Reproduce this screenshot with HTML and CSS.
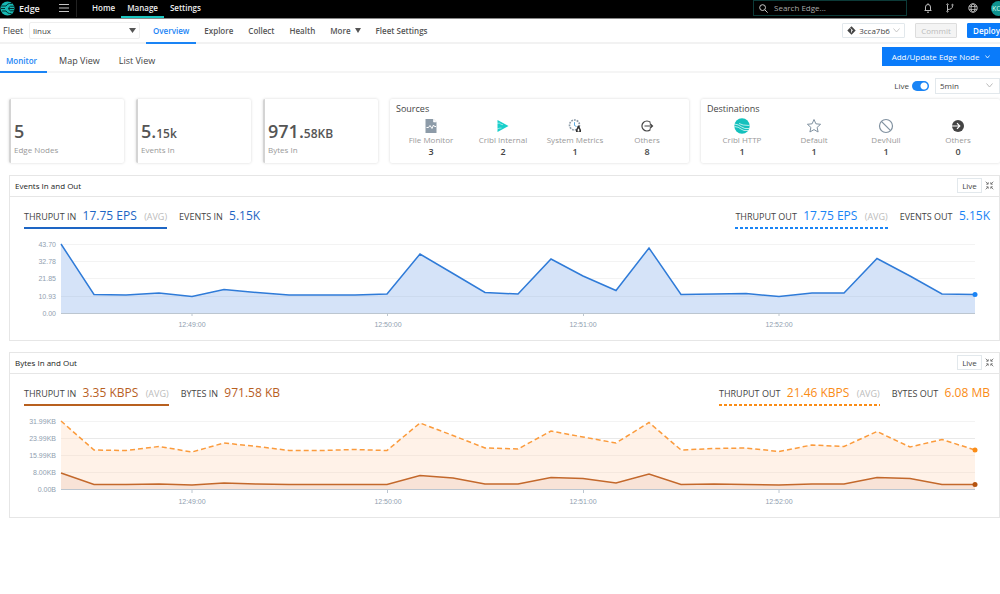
FILE: index.html
```html
<!DOCTYPE html>
<html lang="en">
<head>
  <meta charset="UTF-8">
  <meta name="viewport" content="width=device-width, initial-scale=1.0">
  <title>Edge - Fleet linux</title>
  <link rel="stylesheet" href="styles.css">
</head>
<body>
  <header class="topbar">
    <a class="brand" href="#">
      <svg width="15" height="15" viewBox="0 0 15 15">
        <circle cx="7.5" cy="7.5" r="7" fill="#17b8b3"/>
        <path d="M1 5h5q1.500-2.500 3.500-2.500h3M1 7.500h4M2 10h4q1.500 2.500 3.500 2.500h2M14 5.200h-3.500q-1 0-2 2.300 1 2.300 2 2.300H14M8.500 7.500H14" fill="none" stroke="#062f2e"/>
      </svg>
      <span>Edge</span>
    </a>
    <button class="icon-btn burger" aria-label="Menu">
      <svg width="10" height="10" viewBox="0 0 10 10"><path d="M0 1.500h10M0 5h10M0 8.500h10" stroke="#c4c4c4"/></svg>
    </button>
    <nav class="main-nav">
      <a href="#">Home</a>
      <a href="#" class="active">Manage</a>
      <a href="#">Settings</a>
    </nav>
    <label class="search">
      <svg width="9" height="9" viewBox="0 0 9 9"><circle cx="3.600" cy="3.600" r="2.900" fill="none" stroke="#ccc"/><path d="M5.800 5.800L8.600 8.600" stroke="#ccc"/></svg>
      <input type="text" placeholder="Search Edge..." aria-label="Search Edge">
    </label>
    <div class="top-icons">
      <button class="icon-btn" aria-label="Notifications">
        <svg width="8" height="10" viewBox="0 0 8 10" fill="none" stroke="#bbb"><path d="M.500 7.500h7M1.500 7.500V4a2.500 2.500 0 0 1 5 0v3.500M4 .300v1.200M3 9.200h2"/></svg>
      </button>
      <button class="icon-btn" aria-label="Git">
        <svg width="8" height="10" viewBox="0 0 8 10" fill="none" stroke="#bbb"><path d="M1.500 2v6M1.500 6.500q5 0 5-3.500"/><circle cx="1.500" cy="1.500" r=".7"/><circle cx="1.500" cy="8.400" r=".7"/><circle cx="6.500" cy="2" r=".7"/></svg>
      </button>
      <button class="icon-btn" aria-label="Language">
        <svg width="10" height="10" viewBox="0 0 10 10" fill="none" stroke="#bbb"><circle cx="5" cy="5" r="4.200"/><ellipse cx="5" cy="5" rx="2" ry="4.200"/><path d="M1 3.500h8M1 6.500h8" stroke-width=".8"/></svg>
      </button>
      <button class="avatar" aria-label="Account">KC</button>
    </div>
  </header>

  <div class="fleet-bar">
    <label for="fleet">Fleet</label>
    <select id="fleet" class="fleet-select"><option>linux</option></select>
    <nav class="fleet-nav">
      <a href="#" class="active">Overview</a>
      <a href="#">Explore</a>
      <a href="#">Collect</a>
      <a href="#">Health</a>
      <a href="#">More <svg width="6" height="5" viewBox="0 0 6 5"><path d="M0 0h6L3 5z" fill="#555"/></svg></a>
      <a href="#">Fleet Settings</a>
    </nav>
    <div class="actions">
      <button class="btn commit-id">
        <svg width="9" height="9" viewBox="0 0 9 9"><path d="M4.500.300L8.700 4.500 4.500 8.700.300 4.500z" fill="#444"/><path d="M3.500 2.300l1 1.200v3M4.500 3.500l1.500 1.200" stroke="#fff" stroke-width=".8" fill="none"/></svg>
        3cca7b6
        <svg width="7" height="5" viewBox="0 0 7 5"><path d="M.500.500l3 3.500 3-3.500" fill="none" stroke="#bbb" stroke-width=".8"/></svg>
      </button>
      <button class="btn commit" disabled>Commit</button>
      <button class="btn deploy">Deploy</button>
    </div>
  </div>

  <div class="view-bar">
    <nav class="view-nav">
      <a href="#" class="active">Monitor</a>
      <a href="#">Map View</a>
      <a href="#">List View</a>
    </nav>
    <button class="add-node">
      Add/Update Edge Node
      <svg width="5" height="4" viewBox="0 0 5 4"><path d="M.500.500l2 2.500 2-2.500" fill="none" stroke="#fff" stroke-width=".8"/></svg>
    </button>
  </div>

  <main>
    <div class="live-row">
      <label for="live">Live</label>
      <input type="checkbox" id="live" class="switch" checked>
      <select class="range" aria-label="Time range"><option>5min</option></select>
    </div>

    <section class="cards">
      <div class="card stat">
        <div class="stat-value">5</div>
        <div class="stat-label">Edge Nodes</div>
      </div>
      <div class="card stat">
        <div class="stat-value">5.<small>15k</small></div>
        <div class="stat-label">Events In</div>
      </div>
      <div class="card stat">
        <div class="stat-value">971.<small>58KB</small></div>
        <div class="stat-label">Bytes In</div>
      </div>
      <div class="card group">
        <h2>Sources</h2>
        <ul>
          <li>
            <svg width="16" height="16" viewBox="0 0 16 16"><path d="M2.500 1h8l3 3v11h-11z" fill="#8d9ba8"/><path d="M10.500 1v3h3" fill="#fff" stroke="#fff" stroke-width=".6"/><path d="M3.500 9.500h2l1.500-2 2 3 1.500-3.500 1 1.500h1.500" fill="none" stroke="#fff"/></svg>
            <span>File Monitor</span><b>3</b>
          </li>
          <li>
            <svg width="16" height="16" viewBox="0 0 16 16"><path d="M2.500 2L13.500 8l-11 6z" fill="#19cfcb"/><path d="M2 5.200h2.500q1.500 1.500 3.500 1.500M2 11q2-1 4.500-1" fill="none" stroke="#fff" stroke-width=".5"/></svg>
            <span>Cribl Internal</span><b>2</b>
          </li>
          <li>
            <svg width="16" height="16" viewBox="0 0 16 16"><circle cx="7.500" cy="7" r="5" fill="none" stroke="#8d9ba8" stroke-width="1.600" stroke-dasharray="1.800 1"/><path d="M7.500 4.200V7.500l2 1" fill="none" stroke="#4aa3e0" stroke-width=".9"/><path d="M11.500 7.500q1.300 0 1.300 2 1.800 2.500 1.200 4.500h-5q-.7-2 1.200-4.500 0-2 1.300-2z" fill="#333"/><path d="M11.500 10.200q1.300 1.500.8 3.400h-1.600q-.5-1.900.8-3.400z" fill="#fff"/></svg>
            <span>System Metrics</span><b>1</b>
          </li>
          <li>
            <svg width="16" height="16" viewBox="0 0 16 16" fill="none" stroke="#444" stroke-width="1.200"><path d="M11.500 4.500a5 5 0 1 0 0 7"/><path d="M5.500 8h8M10.800 5.500L13.500 8l-2.700 2.500"/></svg>
            <span>Others</span><b>8</b>
          </li>
        </ul>
      </div>
      <div class="card group">
        <h2>Destinations</h2>
        <ul>
          <li>
            <svg width="16" height="16" viewBox="0 0 16 16"><circle cx="8" cy="8" r="7.700" fill="#14c1bd"/><path d="M.3 6q4 .3 7 2.800t8 1.700M.5 8.500q4 .3 6.500 2.500t7 1.500M5 5.500q3 2 10.500 2" fill="none" stroke="#fff" stroke-width=".7"/></svg>
            <span>Cribl HTTP</span><b>1</b>
          </li>
          <li>
            <svg width="16" height="16" viewBox="0 0 16 16"><path d="M8 1.500l1.900 4.300 4.700.5-3.500 3.100 1 4.600L8 11.600 3.900 14l1-4.600L1.400 6.300l4.700-.5z" fill="none" stroke="#8091a0"/></svg>
            <span>Default</span><b>1</b>
          </li>
          <li>
            <svg width="16" height="16" viewBox="0 0 16 16" fill="none" stroke="#8091a0" stroke-width="1.200"><circle cx="8" cy="8" r="6.500"/><path d="M3.400 3.400l9.200 9.200"/></svg>
            <span>DevNull</span><b>1</b>
          </li>
          <li>
            <svg width="16" height="16" viewBox="0 0 16 16"><circle cx="8" cy="8" r="6" fill="#444"/><path d="M2 8h7.500M7 5.200L9.800 8 7 10.800" fill="none" stroke="#fff" stroke-width="1.200"/></svg>
            <span>Others</span><b>0</b>
          </li>
        </ul>
      </div>
    </section>

    <section class="panel">
      <div class="panel-head">
        <h3>Events In and Out</h3>
        <button class="live-btn">Live</button>
        <button class="icon-btn" aria-label="Expand">
          <svg width="9" height="9" viewBox="0 0 9 9"><path d="M.700.700L3 3M3.200 1.200v2h-2M8.300.700L6 3M5.800 1.200v2h2M.700 8.300L3 6M1.200 5.800h2v2M8.300 8.300L6 6M5.800 7.800v-2h2" fill="none" stroke="#666" stroke-width=".8"/></svg>
        </button>
      </div>
      <div class="legend events">
        <div class="series in">THRUPUT IN <b>17.75 EPS</b> <i>(AVG)</i></div>
        <div class="total in">EVENTS IN <b>5.15K</b></div>
        <div class="series out">THRUPUT OUT <b>17.75 EPS</b> <i>(AVG)</i></div>
        <div class="total out">EVENTS OUT <b>5.15K</b></div>
      </div>
      <svg class="chart" viewBox="0 0 989 104">
        <path class="grid" d="M51 8.500H965M51 25.500H965M51 42.500H965M51 60.500H965"/>
        <polygon fill="#d5e3f8" points="51,8 84,58.5 116,59 149,57 182,60.5 214,53.5 247,56.5 279,59 312,59 345,59 377,58 410,18 443,37.5 475,56.5 508,58 541,23 573,40 606,54.5 639,12 671,58.5 704,58 736,57.5 769,60.5 802,57 834,57 867,22.5 900,40 932,58 965,58.5 965,77 51,77"/>
        <path class="grid over" d="M51 60.500H965"/>
        <polyline class="line" stroke="#2f7bd8" points="51,8 84,58.5 116,59 149,57 182,60.5 214,53.5 247,56.5 279,59 312,59 345,59 377,58 410,18 443,37.5 475,56.5 508,58 541,23 573,40 606,54.5 639,12 671,58.5 704,58 736,57.5 769,60.5 802,57 834,57 867,22.5 900,40 932,58 965,58.5"/>
        <circle cx="965" cy="58.5" r="2.500" fill="#1a84f5"/>
        <path class="axis" d="M51 77.500H965M182 77v3M377.500 77v3M573.500 77v3M769 77v3"/>
        <g class="y-labels">
          <text x="46" y="11">43.70</text>
          <text x="46" y="28">32.78</text>
          <text x="46" y="45">21.85</text>
          <text x="46" y="63">10.93</text>
          <text x="46" y="80">0.00</text>
        </g>
        <g class="x-labels">
          <text x="182" y="91">12:49:00</text>
          <text x="378" y="91">12:50:00</text>
          <text x="573" y="91">12:51:00</text>
          <text x="769" y="91">12:52:00</text>
        </g>
      </svg>
    </section>

    <section class="panel">
      <div class="panel-head">
        <h3>Bytes In and Out</h3>
        <button class="live-btn">Live</button>
        <button class="icon-btn" aria-label="Expand">
          <svg width="9" height="9" viewBox="0 0 9 9"><path d="M.700.700L3 3M3.200 1.200v2h-2M8.300.700L6 3M5.800 1.200v2h2M.700 8.300L3 6M1.200 5.800h2v2M8.300 8.300L6 6M5.800 7.800v-2h2" fill="none" stroke="#666" stroke-width=".8"/></svg>
        </button>
      </div>
      <div class="legend bytes">
        <div class="series in">THRUPUT IN <b>3.35 KBPS</b> <i>(AVG)</i></div>
        <div class="total in">BYTES IN <b>971.58 KB</b></div>
        <div class="series out">THRUPUT OUT <b>21.46 KBPS</b> <i>(AVG)</i></div>
        <div class="total out">BYTES OUT <b>6.08 MB</b></div>
      </div>
      <svg class="chart" viewBox="0 0 989 104">
        <path class="grid" d="M51 8.500H965M51 25.500H965M51 42.500H965M51 59.500H965"/>
        <polygon fill="#fff2e8" points="51,8 84,37 116,37.5 149,33.5 182,39 214,30 247,33.5 279,37.5 312,37.5 345,36.5 377,37.5 410,10 443,22.5 475,35 508,36 541,18 573,24 606,30 639,9.5 671,37 704,35.5 736,35 769,38.5 802,32 834,33.5 867,18.5 900,34 932,26.5 965,37 965,77 51,77"/>
        <polygon fill="#f8e3d7" points="51,60 84,71.5 116,71.5 149,71 182,72 214,70 247,71 279,71.5 312,71.5 345,71.5 377,71.5 410,62.5 443,65 475,71 508,71 541,64.5 573,65.5 606,70 639,61 671,71.5 704,71 736,71.5 769,72 802,71 834,71 867,64.5 900,65.5 932,71.5 965,71.5 965,77 51,77"/>
        <path class="grid over" d="M51 25.500H965M51 42.500H965M51 59.500H965"/>
        <polyline class="line dashed" stroke="#fb9b3c" points="51,8 84,37 116,37.5 149,33.5 182,39 214,30 247,33.5 279,37.5 312,37.5 345,36.5 377,37.5 410,10 443,22.5 475,35 508,36 541,18 573,24 606,30 639,9.5 671,37 704,35.5 736,35 769,38.5 802,32 834,33.5 867,18.5 900,34 932,26.5 965,37"/>
        <polyline class="line" stroke="#c3682b" points="51,60 84,71.5 116,71.5 149,71 182,72 214,70 247,71 279,71.5 312,71.5 345,71.5 377,71.5 410,62.5 443,65 475,71 508,71 541,64.5 573,65.5 606,70 639,61 671,71.5 704,71 736,71.5 769,72 802,71 834,71 867,64.5 900,65.5 932,71.5 965,71.5"/>
        <circle cx="965" cy="37" r="2.500" fill="#fa8c16"/>
        <circle cx="965" cy="71.5" r="2.500" fill="#b5530f"/>
        <path class="axis" d="M51 76.500H965M182 77v3M377.500 77v3M573.500 77v3M769 77v3"/>
        <g class="y-labels">
          <text x="46" y="11">31.99KB</text>
          <text x="46" y="28">23.99KB</text>
          <text x="46" y="45">15.99KB</text>
          <text x="46" y="62">8.00KB</text>
          <text x="46" y="79">0.00B</text>
        </g>
        <g class="x-labels">
          <text x="182" y="91">12:49:00</text>
          <text x="378" y="91">12:50:00</text>
          <text x="573" y="91">12:51:00</text>
          <text x="769" y="91">12:52:00</text>
        </g>
      </svg>
    </section>
  </main>
</body>
</html>
```
FILE: styles.css
```css
* {
  box-sizing: border-box;
}

body {
  margin: 0;
  font-family: 'Open Sans', 'Noto Sans', sans-serif;
  font-size: 8px;
  color: #444;
  background: #fff;
  overflow-x: hidden;
}

a {
  color: inherit;
  text-decoration: none;
}

button, input, select {
  font: inherit;
  color: inherit;
  margin: 0;
}

svg {
  display: block;
  flex: none;
}

.icon-btn {
  background: none;
  border: none;
  padding: 0;
  cursor: pointer;
}

/* Top bar */
.topbar {
  display: flex;
  align-items: center;
  height: 19px;
  padding-bottom: 2px;
  background: #000;
  border-bottom: 1px solid #888;
  color: #eee;
}

.brand {
  display: flex;
  align-items: center;
  gap: 4px;
  width: 59px;
  font-size: 9px;
  font-weight: 600;
}

.burger {
  width: 18px;
  height: 18px;
  border-right: 1px solid #222;
}

.main-nav {
  display: flex;
  align-self: stretch;
  margin-left: 9px;
  font-weight: 600;
}

.main-nav a {
  height: 18px;
  padding: 0 6px;
  line-height: 16px;
}

.main-nav .active {
  border-bottom: 2px solid #1ac6c0;
}

.search {
  display: flex;
  align-items: center;
  gap: 6px;
  width: 154px;
  height: 16px;
  margin-left: auto;
  padding: 0 5px;
  border: 1px solid #0c3a38;
}

.search input {
  flex: 1;
  min-width: 0;
  height: 14px;
  padding: 0 0 2px;
  border: none;
  outline: none;
  background: none;
}

.search input::placeholder {
  color: #aaa;
}

.top-icons {
  display: flex;
  align-items: center;
  gap: 14px;
  margin-left: 17px;
  margin-right: -6px;
}

.avatar {
  width: 15px;
  height: 15px;
  margin-left: -1px;
  padding: 0 0 0 1px;
  border: none;
  border-radius: 50%;
  background: #0f938f;
  color: #cfe;
  font-size: 7px;
  text-align: left;
}

/* Fleet bar */
.fleet-bar {
  display: flex;
  align-items: center;
  height: 25px;
  padding-left: 3px;
  border-bottom: 2px solid #f2f2f2;
}

.fleet-bar > label {
  width: 26px;
  font-size: 9px;
}

.fleet-select {
  width: 111px;
  height: 17px;
  padding: 0 3px 1px;
  border: 1px solid #eee;
  border-radius: 2px;
  appearance: none;
  background: #fff url("data:image/svg+xml,%3Csvg xmlns='http://www.w3.org/2000/svg' width='7' height='5'%3E%3Cpath d='M0 0h7L3.500 5z' fill='%23555'/%3E%3C/svg%3E") no-repeat right 3px center;
}

.fleet-nav {
  display: flex;
  gap: 1px;
  align-self: stretch;
  margin-left: 6px;
  font-weight: 600;
  color: #555;
}

.fleet-nav a {
  display: flex;
  align-items: center;
  gap: 4px;
  height: 25px;
  padding: 0 7px;
  border-bottom: 2px solid transparent;
}

.fleet-nav .active,
.view-nav .active {
  color: #1a84f5;
  border-bottom: 2px solid #1a84f5;
}

.actions {
  display: flex;
  gap: 10px;
  margin-left: auto;
  margin-right: -6px;
}

.btn {
  display: flex;
  align-items: center;
  justify-content: center;
  gap: 3px;
  height: 15px;
  padding: 0 5px;
  border: 1px solid #e2e8ec;
  border-radius: 1px;
  background: #fff;
}

.commit-id {
  width: 63px;
}

.commit {
  width: 42px;
  border-color: #ddd;
  background: #f4f4f4;
  color: #bbb;
}

.deploy {
  width: 39px;
  border-color: #0a7bfa;
  background: #0a7bfa;
  color: #fff;
  font-weight: 600;
}

/* Monitor / map / list tabs */
.view-bar {
  display: flex;
  justify-content: space-between;
  height: 29px;
  border-bottom: 2px solid #f5f5f5;
}

.view-nav {
  display: flex;
  gap: 5px;
}

.view-nav a {
  height: 29px;
  padding: 0 7px;
  border-bottom: 2px solid transparent;
  font-size: 9px;
  line-height: 34px;
}

.view-nav .active {
  padding: 0 10px 0 6px;
  font-size: 8px;
  font-weight: 600;
}

.add-node {
  display: flex;
  align-items: center;
  justify-content: center;
  gap: 6px;
  width: 118px;
  height: 19px;
  margin-top: 3px;
  padding: 0;
  border: none;
  background: #0a7bfa;
  color: #fff;
}

main {
  padding-left: 9px;
}

.live-row {
  display: flex;
  align-items: center;
  justify-content: flex-end;
  height: 15px;
  margin: 5px 0 6px;
}

.switch {
  width: 17px;
  height: 10px;
  margin: 0 6px 0 3px;
  border-radius: 5px;
  appearance: none;
  background: radial-gradient(circle at 12px 5px, #fff 3px, #1a84f5 4px);
}

.range {
  width: 65px;
  height: 16px;
  padding: 0 4px;
  border: 1px solid #e2e8ec;
  border-radius: 0;
  appearance: none;
  background: #fff url("data:image/svg+xml,%3Csvg xmlns='http://www.w3.org/2000/svg' width='7' height='5'%3E%3Cpath d='M.5.5l3 3.500 3-3.500' fill='none' stroke='%23bbb'/%3E%3C/svg%3E") no-repeat right 6px center;
}

/* Summary cards */
.cards {
  display: grid;
  grid-template-columns: repeat(3, 5fr) repeat(2, 13fr);
  gap: 12px;
  margin-bottom: 12px;
}

.card {
  height: 64px;
  border-radius: 2px;
  background: #fff;
  box-shadow: 0 0 3px rgba(0, 0, 0, 0.16);
}

.stat {
  padding: 20px 0 0 3px;
  border-left: 2px solid #d4d4d4;
}

.stat-value {
  height: 24px;
  font-size: 18px;
  line-height: 24px;
  font-weight: 600;
  color: #555;
}

.stat-value small {
  font-size: 12px;
}

.stat-label {
  line-height: 14px;
  color: #999;
}

.group {
  padding: 4px 6px 0 5px;
}

.group h2 {
  margin: 0;
  padding-left: 1px;
  font-size: 9px;
  line-height: 12px;
  font-weight: 400;
}

.group ul {
  display: grid;
  grid-template-columns: repeat(4, 1fr);
  margin: 3px 0 0;
  padding: 0;
  list-style: none;
}

.group li {
  display: flex;
  flex-direction: column;
  align-items: center;
  line-height: 12px;
}

.group li span {
  color: #999;
}

.group li b {
  font-size: 9px;
  line-height: 11px;
  font-weight: 600;
}

/* Chart panels */
.panel {
  margin-bottom: 11px;
  border: 1px solid #e6e6e6;
}

.panel-head {
  display: flex;
  align-items: center;
  gap: 3px;
  height: 21px;
  padding: 0 5px 2px;
  border-bottom: 1px solid #e6e6e6;
}

.panel-head h3 {
  flex: 1;
  margin: 0;
  font-size: 8px;
  font-weight: 400;
  color: #222;
}

.live-btn {
  width: 25px;
  height: 15px;
  padding: 0;
  border: 1px solid #e2e8ec;
  background: #fff;
}

.legend {
  display: flex;
  gap: 12px;
  margin-top: 9px;
  padding: 0 9px 0 14px;
  font-size: 9px;
  line-height: 20px;
}

.legend b {
  margin: 0 5px 0 4px;
  font-size: 12px;
  font-weight: 500;
}

.legend .total b {
  margin-right: 0;
}

.legend i {
  font-style: normal;
  color: #bbb;
}

.series.in {
  border-bottom: 2px solid;
}

.series.out {
  margin-left: auto;
  padding-bottom: 2px;
  background-position: left bottom;
  background-repeat: repeat-x;
  background-size: 5px 2px;
}

.events .in {
  border-color: #1e66c4;
}

.events .in b {
  color: #1e66c4;
}

.events .series.out {
  background-image: linear-gradient(90deg, #1a84f5 3px, transparent 3px);
}

.events .out b {
  color: #1a84f5;
}

.bytes .in {
  border-color: #b8601f;
}

.bytes .in b {
  color: #b8601f;
}

.bytes .series.out {
  background-image: linear-gradient(90deg, #fa8c16 3px, transparent 3px);
}

.bytes .out b {
  color: #fa8c16;
}

.chart {
  width: 100%;
  height: auto;
  margin-top: 7px;
}

.grid {
  stroke: #f3f3f3;
}

.grid.over {
  stroke: rgba(0, 0, 0, 0.04);
}

.axis {
  stroke: #bcc6d0;
}

.line {
  fill: none;
  stroke-width: 1.5;
}

.dashed {
  stroke-dasharray: 5 3;
}

.y-labels,
.x-labels {
  font-family: 'Liberation Sans', Arial, sans-serif;
  font-size: 7px;
  fill: #90a0b0;
}

.y-labels {
  text-anchor: end;
}

.x-labels {
  text-anchor: middle;
}
```
